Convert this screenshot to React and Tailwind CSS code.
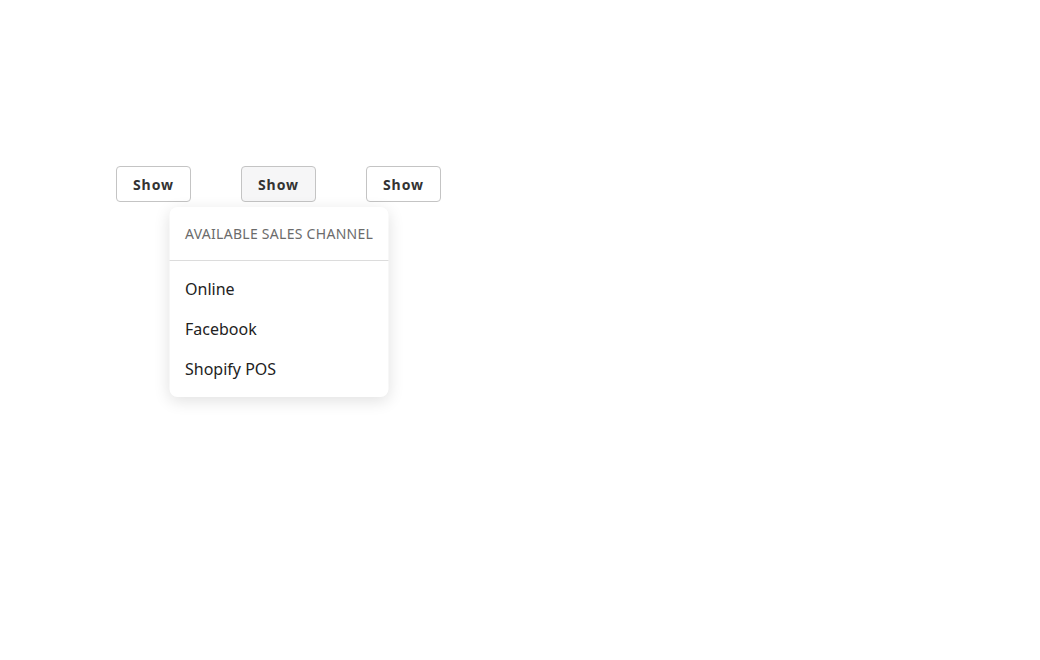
export default function App() {
  const font = { fontFamily: '"Noto Sans", "Open Sans", sans-serif' };
  return (
    <div className="min-h-[660px] w-full bg-white pt-[166px] pl-[116px]" style={font}>
      <div className="flex gap-[50px]">
        <button className="h-9 w-[75px] rounded border border-[#c4c4c4] bg-white pt-px text-sm font-bold tracking-[0.07em] text-[#333]">
          Show
        </button>
        <div className="relative">
          <button className="h-9 w-[75px] rounded border border-[#c4c4c4] bg-[#f6f6f7] pt-px text-sm font-bold tracking-[0.07em] text-[#333]">
            Show
          </button>
          <div className="absolute left-1/2 top-full mt-[5px] w-[219px] -translate-x-1/2 rounded-lg bg-white shadow-[0_4px_16px_rgba(0,0,0,0.12)]">
            <div className="whitespace-nowrap border-b border-[#dcdcdc] px-4 py-4 text-sm leading-[21px] tracking-[0.02em] text-[#6b6b6b]">
              AVAILABLE SALES CHANNEL
            </div>
            <ul className="py-2 text-base text-[#222]">
              <li className="flex h-10 items-center px-4">Online</li>
              <li className="flex h-10 items-center px-4">Facebook</li>
              <li className="flex h-10 items-center px-4">Shopify POS</li>
            </ul>
          </div>
        </div>
        <button className="h-9 w-[75px] rounded border border-[#c4c4c4] bg-white pt-px text-sm font-bold tracking-[0.07em] text-[#333]">
          Show
        </button>
      </div>
    </div>
  );
}
